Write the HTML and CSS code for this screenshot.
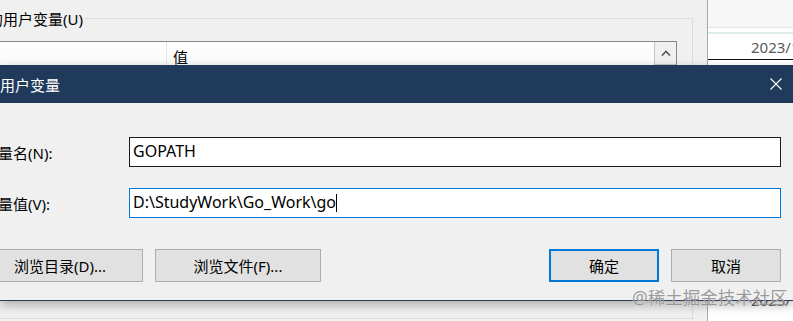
FILE: index.html
```html
<!DOCTYPE html>
<html lang="zh-CN">
<head>
  <meta charset="utf-8">
  <title>编辑用户变量</title>
  <link rel="stylesheet" href="styles.css">
</head>
<body>
  <div class="desk">
    <!-- Hintergrund: Umgebungsvariablen-Fenster -->
    <div class="back-win">
      <div class="group">
        <div class="group-caption">的用户变量(U)</div>
        <div class="list">
          <div class="list-main">
            <div class="list-head">
              <div class="col col-name"></div>
              <div class="col col-value">值</div>
            </div>
          </div>
          <div class="scrollbar">
            <div class="scroll-up">
              <svg width="10" height="6" viewBox="0 0 10 6"><path d="M1 5.5 L5 1.5 L9 5.5" fill="none" stroke="#555" stroke-width="1.6"/></svg>
            </div>
          </div>
        </div>
      </div>
    </div>

    <!-- rechtes Fenster (Explorer) -->
    <div class="side-win">
      <div class="side-top"></div>
      <div class="side-accent"></div>
      <div class="side-row">2023/1/</div>
      <div class="side-fill"></div>
      <div class="side-row side-row-low">2023/1/</div>
    </div>

    <!-- Dialog im Vordergrund -->
    <div class="dialog">
      <div class="titlebar">
        <span class="title">编辑用户变量</span>
        <svg class="close" width="12" height="12" viewBox="0 0 12 12"><path d="M0.5 0.5 L11.5 11.5 M11.5 0.5 L0.5 11.5" stroke="#fff" stroke-width="1.1"/></svg>
      </div>
      <div class="dlg-body">
        <div class="form">
          <label class="label">变量名(N):</label>
          <div class="textbox">GOPATH</div>
          <label class="label">变量值(V):</label>
          <div class="textbox focused">D:\StudyWork\Go_Work\go<span class="caret"></span></div>
        </div>
        <div class="buttons">
          <div class="btn-group left">
            <button class="btn">浏览目录(D)...</button>
            <button class="btn">浏览文件(F)...</button>
          </div>
          <div class="btn-group">
            <button class="btn small default">确定</button>
            <button class="btn small">取消</button>
          </div>
        </div>
      </div>
    </div>

    <div class="watermark">@稀土掘金技术社区</div>
  </div>
</body>
</html>
```

FILE: styles.css
```css
/* Windows-Dialog, nachgebaut */
html, body {
  margin: 0;
  padding: 0;
  height: 100%;
  overflow: hidden;
}
body {
  font-family: "Noto Sans", "Noto Sans CJK SC", sans-serif;
  font-size: 15px;
  color: #000;
  background: #f0f0f0;
}
.desk {
  position: relative;
  display: flex;
  height: 321px;
}

/* Hintergrundfenster */
.back-win {
  width: 708px;
  flex: none;
  box-sizing: border-box;
  padding-top: 18px;
  background: #f0f0f0;
  border-right: 1px solid #a9a9a9;
}
.group {
  width: 713px;
  height: 301px;
  margin-left: -20px;
  box-sizing: border-box;
  border: 1px solid #dcdcdc;
  border-left: none;
}
.group-caption {
  width: fit-content;
  margin: -10px 0 0 8px;
  padding-right: 2px;
  line-height: 20px;
  background: #f0f0f0;
}
.list {
  display: flex;
  width: 687px;
  height: 200px;
  margin: 12px 0 0 10px;
  box-sizing: border-box;
  border: 1px solid #828790;
  background: #fff;
}
.list-main {
  flex: 1;
}
.list-head {
  display: flex;
  height: 23px;
  background: linear-gradient(#fff, #fafafa);
}
.col {
  line-height: 30px;
}
.col-name {
  width: 175px;
  border-right: 1px solid #e5e5e5;
}
.col-value {
  padding-left: 6px;
}
.scrollbar {
  width: 22px;
  background: #f0f0f0;
}
.scroll-up {
  height: 23px;
  box-sizing: border-box;
  border: 1px solid #c4c4c4;
  border-top: none;
  border-right: none;
  display: flex;
  align-items: center;
  justify-content: center;
}

/* rechtes Fenster */
.side-win {
  flex: 1;
  background: #fff;
  display: flex;
  flex-direction: column;
  color: #5a5a5a;
}
.side-top {
  height: 27px;
  background: #f7f7f7;
  border-bottom: 1px solid #e4e4e4;
}
.side-accent {
  height: 2px;
  margin-top: 4px;
  background: #ddeee9;
}
.side-row {
  height: 25px;
  line-height: 26px;
  padding-left: 43px;
  white-space: nowrap;
  border-bottom: 1px solid #111;
}
.side-fill {
  flex: 1;
}
.side-row-low {
  border-bottom: none;
  height: 34px;
}

/* Dialog */
.dialog {
  position: absolute;
  top: 65px;
  left: 0;
  right: 0;
  box-shadow: 0 4px 10px rgba(0, 0, 0, 0.28);
}
.titlebar {
  height: 38px;
  display: flex;
  align-items: center;
  justify-content: space-between;
  padding-right: 11px;
  background: #1f3a5b;
  color: #fff;
}
.title {
  margin-left: -30px;
  white-space: nowrap;
}
.close {
  display: block;
}
.dlg-body {
  height: 198px;
  box-sizing: border-box;
  padding: 34px 12px 18px 0;
  background: #f0f0f0;
  border-bottom: 1px solid #2a3b58;
}
.form {
  display: grid;
  grid-template-columns: 129px 652px;
  row-gap: 21px;
  align-items: center;
}
.label {
  margin-left: -17px;
  white-space: nowrap;
}
.textbox {
  height: 30px;
  box-sizing: border-box;
  border: 1px solid #1a1a1a;
  background: #fff;
  padding-left: 3px;
  font-size: 16px;
  line-height: 27px;
  white-space: nowrap;
}
.textbox.focused {
  border-color: #0078d7;
}
.caret {
  display: inline-block;
  width: 1px;
  height: 18px;
  background: #000;
  vertical-align: -4px;
}
.buttons {
  display: flex;
  justify-content: space-between;
  margin-top: 31px;
}
.btn-group {
  display: flex;
  gap: 12px;
}
.btn-group.left {
  margin-left: -23px;
}
.btn {
  width: 166px;
  height: 33px;
  padding: 0;
  font: inherit;
  color: #000;
  background: #e1e1e1;
  border: 1px solid #adadad;
}
.btn.small {
  width: 110px;
}
.btn.default {
  border: 2px solid #0078d7;
}

/* Wasserzeichen */
.watermark {
  position: absolute;
  top: 287px;
  left: 632px;
  font-size: 17.5px;
  line-height: 20px;
  white-space: nowrap;
  color: rgba(110, 110, 110, 0.7);
  text-shadow: 0 0 1px rgba(255, 255, 255, 0.9);
}
```
